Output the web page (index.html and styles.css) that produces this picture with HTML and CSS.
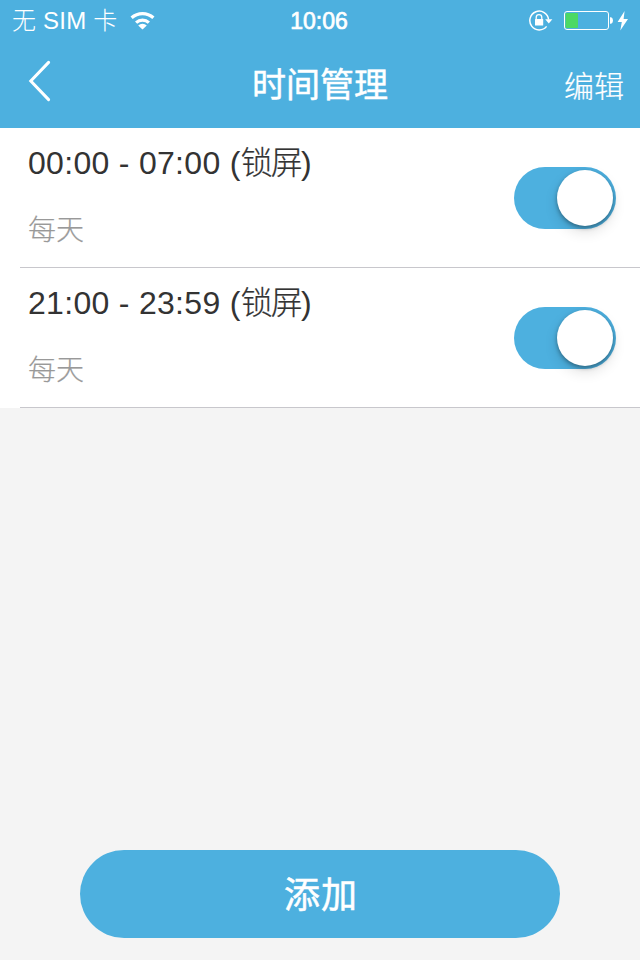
FILE: index.html
```html
<!DOCTYPE html>
<html lang="zh-CN">
<head>
    <meta charset="UTF-8">
    <meta name="viewport" content="width=device-width, initial-scale=1.0">
    <title>时间管理</title>
    <link rel="stylesheet" href="styles.css">
</head>
<body>
    <header class="header">
        <div class="status-bar">
            <div class="status-left">
                <span class="carrier">无 SIM 卡</span>
                <svg class="wifi" width="26" height="20" viewBox="0 0 26 20">
                    <path d="M1.6 6.8a16.2 16.2 0 0 1 21.8 0M6.1 11.6a9.4 9.4 0 0 1 12.8 0" fill="none" stroke="#fff" stroke-width="3.2"/>
                    <path d="M12.5 18.6l-4.3-4.2a6.1 6.1 0 0 1 8.6 0z" fill="#fff"/>
                </svg>
            </div>
            <span class="clock">10:06</span>
            <div class="status-right">
                <svg width="24" height="22" viewBox="0 0 24 22">
                    <path d="M17.6 16.4A9.4 9.4 0 1 1 19.6 9.6" fill="none" stroke="#fff" stroke-width="1.5"/>
                    <path d="M16.2 9.2h7.2l-3.6 4.3z" fill="#fff"/>
                    <path d="M7.2 10V7.4a2.8 2.8 0 0 1 5.6 0V10" fill="none" stroke="#fff" stroke-width="1.3"/>
                    <rect x="6" y="9" width="8.2" height="6.4" rx=".5" fill="#fff"/>
                </svg>
                <svg class="battery" width="50" height="20" viewBox="0 0 50 20">
                    <rect x=".5" y=".5" width="44" height="18" rx="2.5" fill="none" stroke="#fff"/>
                    <rect x="1.5" y="2" width="12.5" height="15" rx="1" fill="#4cd964"/>
                    <path d="M46 6.2h1.2q1.8 1 1.8 3.3t-1.8 3.3H46z" fill="#fff"/>
                </svg>
                <svg class="bolt" width="12" height="20" viewBox="0 0 12 20">
                    <path d="M7.6 0L.6 11h4.2L3.3 19.5 11 8H6.6z" fill="#fff"/>
                </svg>
            </div>
        </div>
        <nav class="nav-bar">
            <svg class="back" width="24" height="42" viewBox="0 0 24 42">
                <path d="M20.6 2.4L2.8 21l17.8 18.6" fill="none" stroke="#fff" stroke-width="3" stroke-linecap="round"/>
            </svg>
            <h1 class="title">时间管理</h1>
            <span class="edit">编辑</span>
        </nav>
    </header>

    <ul class="list">
        <li class="item">
            <div class="item-text">
                <p class="time">00:00 - 07:00 (<span class="mode">锁屏</span>)</p>
                <p class="repeat">每天</p>
            </div>
            <div class="switch"><span class="knob"></span></div>
        </li>
        <li class="item">
            <div class="item-text">
                <p class="time">21:00 - 23:59 (<span class="mode">锁屏</span>)</p>
                <p class="repeat">每天</p>
            </div>
            <div class="switch"><span class="knob"></span></div>
        </li>
    </ul>

    <button class="add">添加</button>
</body>
</html>
```
FILE: styles.css
```css
* {
    box-sizing: border-box;
    margin: 0;
    padding: 0;
}
body {
    width: 640px;
    height: 960px;
    display: flex;
    flex-direction: column;
    background-color: #f4f4f4;
    font-family: "Liberation Sans", "Noto Sans CJK SC", sans-serif;
    font-weight: 300;
    overflow: hidden;
}
.header {
    height: 128px;
    background-color: #4db0df;
    color: white;
}
.status-bar {
    height: 42px;
    display: grid;
    grid-template-columns: 1fr auto 1fr;
    align-items: center;
    padding: 0 11px 0 12px;
    font-size: 24px;
    line-height: 42px;
}
.status-left, .status-right {
    display: flex;
    align-items: center;
}
.status-right {
    justify-content: flex-end;
}
.carrier {
    letter-spacing: 0.2px;
}
.wifi {
    margin-left: 13px;
    margin-top: -1px;
}
.clock {
    margin-right: 3px;
    font-size: 23px;
    -webkit-text-stroke: 0.7px white;
}
.battery {
    margin-left: 11px;
}
.bolt {
    margin-left: 3px;
}
.nav-bar {
    height: 86px;
    display: grid;
    grid-template-columns: 1fr auto 1fr;
    align-items: center;
    padding: 0 16px 0 28px;
}
.back {
    margin-top: -8px;
}
.title {
    margin-right: 12px;
    font-size: 34px;
    font-weight: 400;
    line-height: 86px;
    -webkit-text-stroke: 0.5px white;
}
.edit {
    justify-self: end;
    margin-top: -2px;
    font-size: 30px;
    -webkit-text-stroke: 0.2px white;
}
.list {
    list-style-type: none;
    background-color: white;
}
.item {
    height: 140px;
    display: flex;
    justify-content: space-between;
    align-items: center;
    margin-left: 20px;
    padding: 0 24px 0 8px;
    border-bottom: 1px solid #c8c7cc;
}
.item-text {
    align-self: flex-start;
    padding-top: 11px;
}
.time {
    color: #333;
    font-size: 32px;
    line-height: 48px;
    letter-spacing: 0.3px;
}
.mode {
    letter-spacing: -1.8px;
    -webkit-text-stroke: 0.2px #333;
}
.repeat {
    margin-top: 24px;
    color: #999;
    font-size: 28px;
    line-height: 40px;
    -webkit-text-stroke: 0.2px #999;
}
.switch {
    width: 102px;
    height: 62px;
    display: flex;
    justify-content: flex-end;
    padding: 3px;
    border-radius: 31px;
    background-color: #4db0df;
}
.knob {
    width: 56px;
    height: 56px;
    border-radius: 50%;
    background-color: white;
    box-shadow: 0 2px 4px rgba(0, 0, 0, 0.35), 0 6px 14px rgba(0, 0, 0, 0.12);
}
.add {
    width: 480px;
    height: 88px;
    margin: auto auto 22px;
    padding: 0 0 5px 2px;
    border: none;
    border-radius: 44px;
    background-color: #4db0df;
    color: white;
    font-family: inherit;
    font-size: 36px;
    font-weight: 400;
    letter-spacing: 1px;
    -webkit-text-stroke: 0.5px white;
    cursor: pointer;
}
```
